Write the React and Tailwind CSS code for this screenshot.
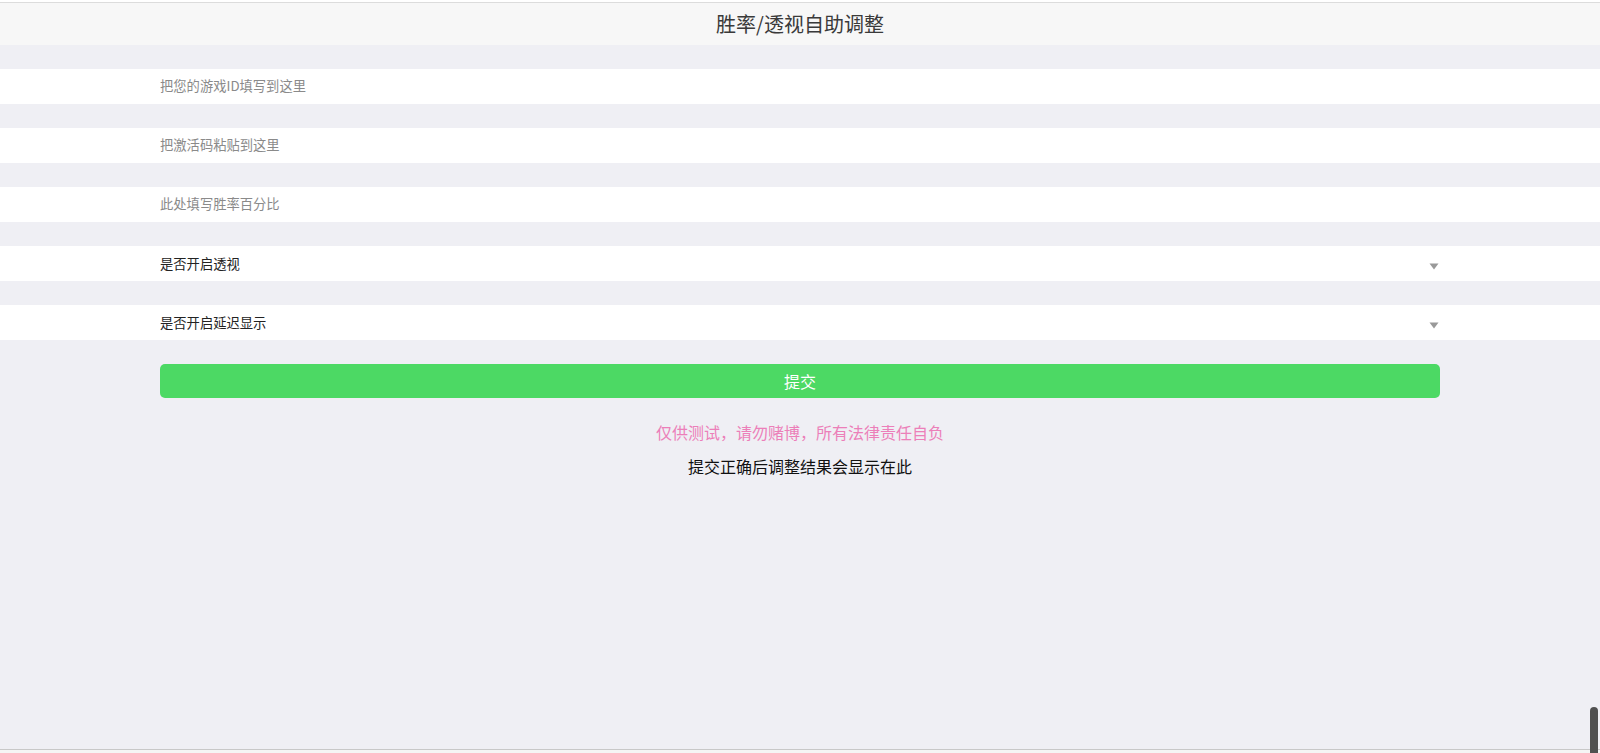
import React from "react";

const font = { fontFamily: '"Microsoft YaHei", "Noto Sans CJK SC", "Noto Sans", sans-serif' };

function InputRow({ placeholder }) {
  return (
    <div className="h-[35px] bg-white flex items-center px-[10%]">
      <input
        className="w-full h-[20px] mb-[3px] bg-transparent outline-none text-[13.3px] text-[#333] placeholder:text-[#8a8a8a]"
        placeholder={placeholder}
        style={font}
      />
    </div>
  );
}

function SelectRow({ label }) {
  return (
    <div className="h-[35px] bg-white flex items-center px-[10%]">
      <div className="w-full flex items-center justify-between text-[13.3px] text-[#222]">
        <span>{label}</span>
        <svg width="10" height="7" viewBox="0 0 10 7" className="mt-[5px] mr-[1px]">
          <path d="M0.5 0.5 H9.5 L5 6.5 Z" fill="#999" />
        </svg>
      </div>
    </div>
  );
}

export default function App() {
  return (
    <div className="relative h-[753px] overflow-hidden bg-[#efeff4] flex flex-col" style={font}>
      <div className="h-[2px] bg-white" />
      <div className="h-[43px] bg-[#f7f7f7] border-t border-[#dcdcdc] flex items-center justify-center">
        <h1 className="text-[20px] text-[#3a3a3a] font-normal">胜率/透视自助调整</h1>
      </div>
      <div className="pt-[24px] flex flex-col gap-[24px]">
        <InputRow placeholder="把您的游戏ID填写到这里" />
        <InputRow placeholder="把激活码粘贴到这里" />
        <InputRow placeholder="此处填写胜率百分比" />
        <SelectRow label="是否开启透视" />
        <SelectRow label="是否开启延迟显示" />
      </div>
      <div className="px-[10%] mt-[24px]">
        <button className="w-full h-[34px] rounded-[5px] bg-[#4cd964] text-white text-[16px]" style={font}>
          提交
        </button>
      </div>
      <p className="mt-[17px] text-center text-[16px] leading-[34px] text-[#ec7fb9]">
        仅供测试，请勿赌博，所有法律责任自负
      </p>
      <p className="text-center text-[16px] leading-[34px] text-[#111]">提交正确后调整结果会显示在此</p>
      <div className="flex-1" />
      <div className="h-px bg-[#c8c8c8]" />
      <div className="h-[3px] bg-[#f5f5f5]" />
      <div className="absolute right-[2px] bottom-0 w-[8px] h-[46px] rounded-t-full bg-[#505050]" />
    </div>
  );
}
